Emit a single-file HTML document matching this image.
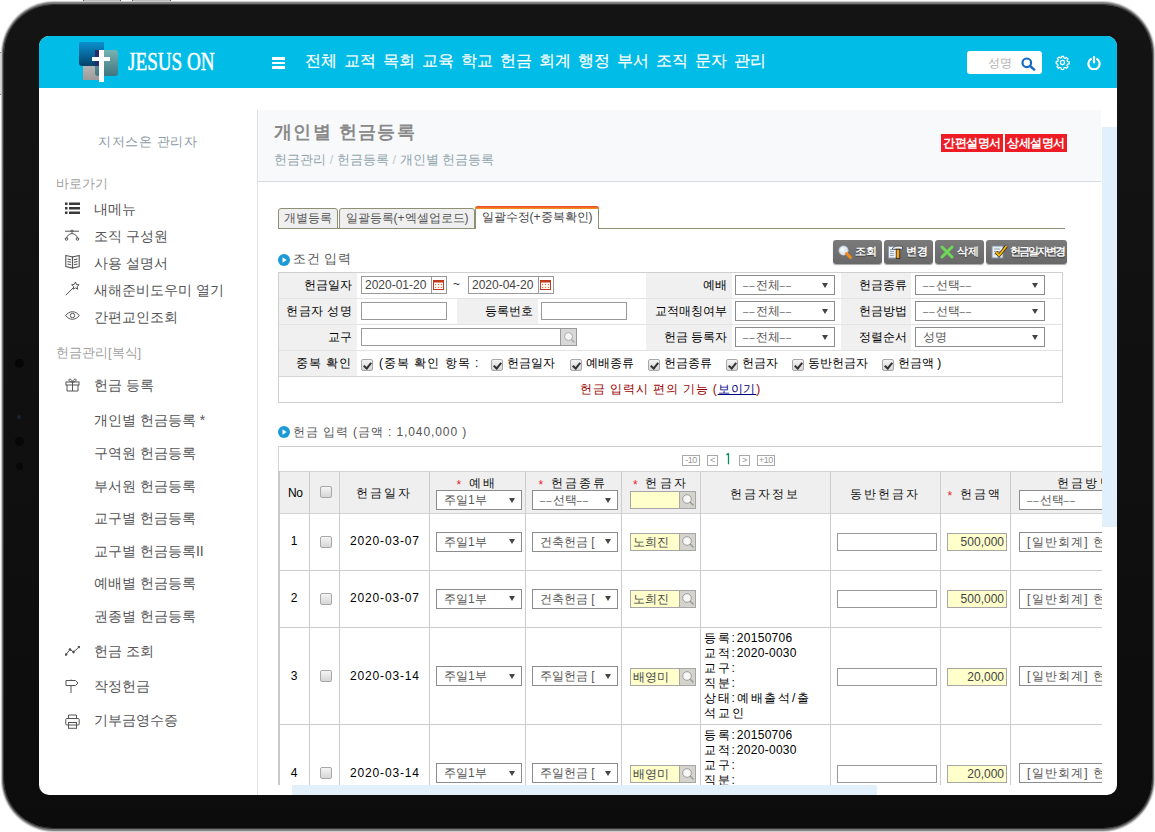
<!DOCTYPE html>
<html><head><meta charset="utf-8">
<style>
*{box-sizing:border-box}
html,body{margin:0;padding:0;width:1155px;height:832px;overflow:hidden;background:#fff;font-family:"Liberation Sans",sans-serif;color:#333}
.a{position:absolute}
#frame{left:1.5px;top:1.5px;width:1152.5px;height:829px;border-radius:52px;background:#8a8a8a;box-shadow:0 0 1px 0.5px #c8c8c8}
#bez{left:4px;top:4.5px;width:1147.5px;height:823.5px;border-radius:49px;background:linear-gradient(#141414,#0c0c0c);box-shadow:0 0 1.5px 1px #222}
#screen{left:39px;top:36px;width:1078px;height:759px;border-radius:10px;overflow:hidden;background:#fff}
#pg{left:-39px;top:-36px;width:1155px;height:832px}
#hdr{left:39px;top:36px;width:1078px;height:52px;background:#00bce6}
.nav{top:51px;color:#fff;font-size:15.5px;-webkit-text-stroke:0.2px #fff;white-space:nowrap}
.side{color:#555;font-size:14px;white-space:nowrap}
.btnr{height:18px;background:#ee1d25;color:#fff;font-size:12px;font-weight:bold;text-align:center;line-height:18px;white-space:nowrap;letter-spacing:-0.5px}
.tab{height:21px;border:1px solid #8f8f73;border-radius:3px 3px 0 0;background:#efefef;font-size:12px;color:#555;text-align:center;line-height:19px;white-space:nowrap}
.btng{height:24px;border-radius:3px;background:linear-gradient(#7a7a7a,#686868);box-shadow:0 1px 1px rgba(0,0,0,.35);color:#fff;font-size:11px;font-weight:bold;line-height:23px;white-space:nowrap;text-shadow:0 1px 1px rgba(0,0,0,.45)}
.lbl{font-size:12px;color:#000;white-space:nowrap;text-align:right;margin-top:-1px}
.inp{border:1px solid #999;background:#fff;height:18px}
.sel{border:1px solid #8c8c8c;background:#fff;height:20px;font-size:12px;color:#555;line-height:18px;padding-left:7px;white-space:nowrap;overflow:hidden}
.sel:after{content:"";position:absolute;right:6px;top:6.5px;border-left:3.2px solid transparent;border-right:3.2px solid transparent;border-top:5.5px solid #444}
.cb{width:12px;height:12px;border:1px solid #a8a8a8;border-radius:2px;background:linear-gradient(#f4f4f4,#d6d6d6)}
.cbc:after{content:"";position:absolute;left:2.5px;top:1px;width:3px;height:6px;border-right:2px solid #333;border-bottom:2px solid #333;transform:rotate(40deg)}
.hl{height:1px;background:#e3e3e3}
.gbg{background:#f0f0f0}
.d{font-style:normal;letter-spacing:1px;font-size:9.5px}
.vl{position:absolute;width:1px;background:#cccccc}
.num{font-size:12px;color:#000;white-space:nowrap;letter-spacing:0.85px}
.th{font-size:12px;color:#111;white-space:nowrap;letter-spacing:2.2px;text-align:center}
.ast{color:#e8232a;-webkit-text-stroke:0;font-size:12px;position:relative;top:2px}
.yin{border:1px solid #a6a6a6;background:#ffffcc;height:18px;font-size:12px;color:#444;line-height:16px;white-space:nowrap}
.mag{position:absolute;top:-1px;height:18px;width:17px;border:1px solid #a6a6a6;background:#d5d3cd}
.info{font-size:12px;color:#000;line-height:14.9px;white-space:nowrap;letter-spacing:1.8px}
.pgb{height:11px;border:1px solid #a8a8a8;font-size:9px;color:#999;text-align:center;line-height:9px;letter-spacing:-0.5px}
.n{font-style:normal;letter-spacing:0.3px}
</style></head><body>
<!-- top buttons -->
<div class="a" style="left:83px;top:0;width:38px;height:5px;background:linear-gradient(#bbb,#e0e0e0);border-left:1.5px solid #555;border-right:1.5px solid #555"></div>
<div class="a" style="left:132px;top:0;width:39px;height:5px;background:linear-gradient(#bbb,#e0e0e0);border-left:1.5px solid #555;border-right:1.5px solid #555"></div>
<div class="a" style="left:0;top:52px;width:5px;height:43px;background:#ddd;border-top:1px solid #888;border-bottom:1px solid #888"></div>
<div id="frame" class="a"></div><div id="bez" class="a"></div>
<div class="a" style="left:15px;top:359px;width:9px;height:9px;border-radius:50%;background:#060606"></div>
<div class="a" style="left:17px;top:415px;width:4px;height:4px;border-radius:50%;background:#1c2230"></div>
<div class="a" style="left:15px;top:437px;width:9px;height:9px;border-radius:50%;background:#070707"></div>
<div class="a" style="left:16px;top:463px;width:7px;height:7px;border-radius:50%;background:#080808"></div>
<div id="screen" class="a">
<div id="pg" class="a">
<div id="hdr" class="a"></div>
<!-- logo -->
<div class="a" style="left:83px;top:66px;width:17px;height:14px;background:linear-gradient(#b8b4b4,#9c9a9a)"></div>
<div class="a" style="left:79px;top:42px;width:25px;height:24px;border-radius:1px 1px 1px 3px;background:linear-gradient(#0c8fcf,#04426a)"></div>
<div class="a" style="left:95px;top:50px;width:23px;height:26px;border-radius:3px;background:linear-gradient(#78b2b2,#3f7680)"></div>
<div class="a" style="left:95px;top:50px;width:9px;height:16px;background:#2a2a66"></div>
<div class="a" style="left:99px;top:50px;width:4.5px;height:32px;background:#fff"></div>
<div class="a" style="left:92px;top:57px;width:18px;height:4px;background:#fff"></div>
<div class="a" style="left:128px;top:47.5px;color:#fff;font-family:'Liberation Serif',serif;font-size:25px;-webkit-text-stroke:0.5px #fff;letter-spacing:0px;transform:scaleX(0.765);transform-origin:left top;white-space:nowrap">JESUS ON</div>
<!-- hamburger -->
<div class="a" style="left:272px;top:57px;width:13px;height:2.5px;background:#fff"></div>
<div class="a" style="left:272px;top:61.5px;width:13px;height:2.5px;background:#fff"></div>
<div class="a" style="left:272px;top:66px;width:13px;height:2.5px;background:#fff"></div>
<div class="a nav" style="left:305px">전체</div>
<div class="a nav" style="left:344px">교적</div>
<div class="a nav" style="left:383px">목회</div>
<div class="a nav" style="left:422px">교육</div>
<div class="a nav" style="left:461px">학교</div>
<div class="a nav" style="left:500px">헌금</div>
<div class="a nav" style="left:539px">회계</div>
<div class="a nav" style="left:578px">행정</div>
<div class="a nav" style="left:617px">부서</div>
<div class="a nav" style="left:656px">조직</div>
<div class="a nav" style="left:695px">문자</div>
<div class="a nav" style="left:734px">관리</div>
<!-- sidebar -->
<div class="a" style="left:257px;top:110px;width:1px;height:700px;background:#dde1e4"></div>
<div class="a" style="left:39px;top:133px;width:218px;text-align:center;font-size:13px;color:#8d9ba5;letter-spacing:0.6px">지저스온 관리자</div>
<div class="a" style="left:56px;top:175px;font-size:13px;color:#a0a0a0;white-space:nowrap">바로가기</div>
<div class="a side" style="left:94px;top:201px">내메뉴</div>
<div class="a side" style="left:94px;top:228px">조직 구성원</div>
<div class="a side" style="left:94px;top:255px">사용 설명서</div>
<div class="a side" style="left:94px;top:282px">새해준비도우미 열기</div>
<div class="a side" style="left:94px;top:309px">간편교인조회</div>
<div class="a" style="left:56px;top:344px;font-size:13px;color:#a0a0a0;white-space:nowrap">헌금관리[복식]</div>
<div class="a side" style="left:94px;top:377px">헌금 등록</div>
<div class="a side" style="left:94px;top:412px">개인별 헌금등록 *</div>
<div class="a side" style="left:94px;top:445px">구역원 헌금등록</div>
<div class="a side" style="left:94px;top:478px">부서원 헌금등록</div>
<div class="a side" style="left:94px;top:510px">교구별 헌금등록</div>
<div class="a side" style="left:94px;top:543px">교구별 헌금등록II</div>
<div class="a side" style="left:94px;top:575px">예배별 헌금등록</div>
<div class="a side" style="left:94px;top:608px">권종별 헌금등록</div>
<div class="a side" style="left:94px;top:643px">헌금 조회</div>
<div class="a side" style="left:94px;top:678px">작정헌금</div>
<div class="a side" style="left:94px;top:712px">기부금영수증</div>
<!-- sidebar icons -->
<svg class="a" style="left:65px;top:202px" width="15" height="13" viewBox="0 0 15 13"><g fill="#3a3a3a"><rect x="0" y="0.5" width="2.5" height="2.5"/><rect x="4" y="0.5" width="11" height="2.5"/><rect x="0" y="5" width="2.5" height="2.5"/><rect x="4" y="5" width="11" height="2.5"/><rect x="0" y="9.5" width="2.5" height="2.5"/><rect x="4" y="9.5" width="11" height="2.5"/></g></svg>
<svg class="a" style="left:64px;top:229px" width="16" height="12" viewBox="0 0 16 12"><g fill="none" stroke="#555" stroke-width="1"><path d="M2.5 9.5C3.5 3 12.5 3 13.5 9.5"/><line x1="1" y1="2.2" x2="15" y2="2.2"/><circle cx="2.5" cy="10" r="1.3"/><circle cx="13.5" cy="10" r="1.3"/><circle cx="8" cy="2.2" r="1.1"/></g></svg>
<svg class="a" style="left:65px;top:254px" width="15" height="15" viewBox="0 0 15 15"><g fill="none" stroke="#555" stroke-width="1.1"><path d="M0.8 1.5L7.5 3V14L0.8 12.5Z"/><path d="M14.2 1.5L7.5 3V14L14.2 12.5Z"/><path d="M2.5 5l3.5 .8M2.5 7.5l3.5 .8M2.5 10l3.5 .8M12.5 5l-3.5 .8M12.5 7.5l-3.5 .8M12.5 10l-3.5 .8"/></g></svg>
<svg class="a" style="left:65px;top:281px" width="15" height="15" viewBox="0 0 15 15"><g fill="none" stroke="#555" stroke-width="1"><path d="M0.8 14.2L9 6"/><path d="M10.5 1l1 2.5 2.6.3-2 1.8.6 2.6-2.3-1.3-2.3 1.3.5-2.6-2-1.8 2.6-.3z"/></g></svg>
<svg class="a" style="left:65px;top:310px" width="15" height="11" viewBox="0 0 15 11"><g fill="none" stroke="#555" stroke-width="1"><path d="M0.8 5.5C4 0.5 11 0.5 14.2 5.5C11 10.5 4 10.5 0.8 5.5Z"/><circle cx="7.5" cy="5.5" r="2.2"/></g></svg>
<svg class="a" style="left:65px;top:377px" width="15" height="15" viewBox="0 0 15 15"><g fill="none" stroke="#555" stroke-width="1"><rect x="1" y="5" width="13" height="3"/><path d="M2 8v6h11V8"/><path d="M7.5 5v9"/><path d="M7.5 5C6 1 3.5 1.5 4 3.5 4.3 4.5 6 5 7.5 5 9 5 10.7 4.5 11 3.5 11.5 1.5 9 1 7.5 5"/></g></svg>
<svg class="a" style="left:65px;top:646px" width="15" height="10" viewBox="0 0 15 10"><g fill="#444" stroke="#555" stroke-width="1"><path d="M1 8.5L5 3.5 8.5 6 14 1" fill="none"/><circle cx="1" cy="8.5" r="0.9"/><circle cx="5" cy="3.5" r="0.9"/><circle cx="8.5" cy="6" r="0.9"/><circle cx="14" cy="1" r="0.9"/></g></svg>
<svg class="a" style="left:65px;top:679px" width="14" height="15" viewBox="0 0 14 15"><g fill="none" stroke="#555" stroke-width="1"><path d="M1 1.5H10.5L13 4 10.5 6.5H1Z"/><path d="M6 0.5V1.5M6 6.5V14"/></g></svg>
<svg class="a" style="left:65px;top:714px" width="15" height="15" viewBox="0 0 15 15"><g fill="none" stroke="#555" stroke-width="1"><path d="M3.5 4.5V1h8v3.5"/><rect x="0.8" y="4.5" width="13.4" height="6.5" rx="1"/><rect x="3.5" y="8.5" width="8" height="5.8"/></g></svg>
<!-- page header -->
<div class="a" style="left:258px;top:110px;width:843px;height:72px;background:#f7f9fb;border-bottom:1px solid #d3dde2"></div>
<div class="a" style="left:274px;top:120px;font-size:18px;font-weight:bold;color:#8a8a8a;white-space:nowrap;letter-spacing:1.4px">개인별 헌금등록</div>
<div class="a" style="left:274px;top:151px;font-size:13px;color:#92a4ab;white-space:nowrap">헌금관리 <span style="color:#c8c8c8">/</span> 헌금등록 <span style="color:#c8c8c8">/</span> 개인별 헌금등록</div>
<div class="a btnr" style="left:941px;top:134px;width:62px">간편설명서</div>
<div class="a btnr" style="left:1005px;top:134px;width:62px">상세설명서</div>
<!-- v scrollbar -->
<div class="a" style="left:1102px;top:127px;width:15px;height:400px;background:#e1f0fb"></div>
<!-- tabs -->
<div class="a" style="left:278px;top:227.5px;width:787px;height:1px;background:#8f8f73"></div>
<div class="a tab" style="left:278px;top:208px;width:60px">개별등록</div>
<div class="a tab" style="left:339px;top:208px;width:136px">일괄등록(+엑셀업로드)</div>
<div class="a tab" style="left:475px;top:206px;width:124px;height:23px;background:#fff;border-top:0;border-bottom:0;line-height:22px;color:#444"><div class="a" style="left:-1px;top:0;width:124px;height:3px;border-radius:3px 3px 0 0;background:linear-gradient(#e8402a,#f59a1f)"></div>일괄수정(+중복확인)</div>
<!-- action buttons -->
<div class="a btng" style="left:833px;top:240px;width:49px"><svg class="a" style="left:5px;top:5px" width="14" height="14" viewBox="0 0 14 14"><circle cx="5.5" cy="5.5" r="4.5" fill="#dfeaf2" stroke="#c8d0d6" stroke-width="1"/><circle cx="4.5" cy="4.5" r="2" fill="#fff" opacity=".8"/><path d="M8.5 8.5L12.5 12.5" stroke="#f08a1c" stroke-width="3" stroke-linecap="round"/></svg><span class="a" style="left:22px;top:0">조회</span></div>
<div class="a btng" style="left:884px;top:240px;width:49px"><svg class="a" style="left:4px;top:5px" width="15" height="14" viewBox="0 0 15 14"><rect x="0.5" y="1.5" width="9" height="11.5" fill="#eef2f7" stroke="#8d9cb0" stroke-width="1"/><path d="M2 4.5h6M2 6.5h4M2 8.5h4M2 10.5h4" stroke="#8d9cb0" stroke-width=".9"/><path d="M4.5 3.2C6 1.2 10 0.6 14.5 1.6V4.2H4.5Z" fill="#f2f2f2" stroke="#333" stroke-width=".7"/><rect x="8.2" y="4.2" width="3.6" height="9.3" fill="#f7a21b" stroke="#222" stroke-width=".8"/></svg><span class="a" style="left:22px;top:0">변경</span></div>
<div class="a btng" style="left:935px;top:240px;width:49px"><svg class="a" style="left:5px;top:5px" width="14" height="14" viewBox="0 0 14 14"><path d="M2 2L12 12M12 2L2 12" stroke="#6fd65a" stroke-width="3" stroke-linecap="round"/></svg><span class="a" style="left:22px;top:0">삭제</span></div>
<div class="a btng" style="left:986px;top:240px;width:81px"><svg class="a" style="left:5px;top:4px" width="17" height="15" viewBox="0 0 17 15"><rect x="1" y="2" width="11" height="12" fill="#e8eef5" stroke="#7d8ea3" stroke-width="1"/><path d="M3 5h6M3 7.5h6M3 10h6" stroke="#7d8ea3" stroke-width=".8"/><path d="M5 8l3 3.5L15.5 2" fill="none" stroke="#222" stroke-width="3.2"/><path d="M5 8l3 3.5L15.5 2" fill="none" stroke="#f7b500" stroke-width="2"/></svg><span class="a" style="left:24px;top:0;letter-spacing:-2.1px;font-size:10.5px">헌금일자변경</span></div>
<!-- section 1 title -->
<svg class="a" style="left:278px;top:254px" width="12" height="12" viewBox="0 0 12 12"><circle cx="6" cy="6" r="6" fill="#1a9ad6"/><path d="M4.5 3.3L8.6 6 4.5 8.7Z" fill="#fff"/></svg>
<div class="a" style="left:293px;top:250px;font-size:13px;color:#555;white-space:nowrap;letter-spacing:0.6px">조건 입력</div>
<!-- condition table -->
<div class="a" style="left:278px;top:272px;width:785px;height:131px;border:1px solid #cfcfcf;background:#fff"></div>
<div class="a gbg" style="left:279px;top:273px;width:78px;height:103px"></div>
<div class="a gbg" style="left:646px;top:273px;width:86px;height:77px"></div>
<div class="a gbg" style="left:841px;top:273px;width:70px;height:77px"></div>
<div class="a gbg" style="left:457px;top:299px;width:81px;height:25px"></div>
<div class="a hl" style="left:279px;top:298px;width:783px"></div>
<div class="a hl" style="left:279px;top:324px;width:783px"></div>
<div class="a hl" style="left:279px;top:350px;width:783px"></div>
<div class="a" style="left:279px;top:376px;width:783px;height:1px;background:#d6d6d6"></div>
<div class="a lbl" style="left:279px;top:278px;width:73px">헌금일자</div>
<div class="a lbl" style="left:279px;top:304px;width:73px;letter-spacing:0.4px">헌금자 성명</div>
<div class="a lbl" style="left:279px;top:330px;width:73px">교구</div>
<div class="a lbl" style="left:279px;top:356px;width:73px;letter-spacing:1px">중복 확인</div>
<div class="a lbl" style="left:457px;top:304px;width:76px">등록번호</div>
<div class="a lbl" style="left:646px;top:278px;width:81px">예배</div>
<div class="a lbl" style="left:646px;top:304px;width:81px">교적매칭여부</div>
<div class="a lbl" style="left:646px;top:330px;width:81px">헌금 등록자</div>
<div class="a lbl" style="left:841px;top:278px;width:66px">헌금종류</div>
<div class="a lbl" style="left:841px;top:304px;width:66px">헌금방법</div>
<div class="a lbl" style="left:841px;top:330px;width:66px">정렬순서</div>
<!-- date inputs -->
<div class="a inp" style="left:361px;top:276px;width:86px"><div class="a" style="left:68.5px;top:0;width:1px;height:16px;background:#999"></div><span class="a" style="left:3px;top:1px;font-size:12px;color:#444;white-space:nowrap">2020-01-20</span><svg class="a" style="left:71px;top:3px" width="11" height="10" viewBox="0 0 11 10"><rect x=".5" y=".5" width="10" height="9" fill="#fff" stroke="#c0391b"/><rect x=".5" y=".5" width="10" height="2" fill="#c0391b"/><g fill="#f07a3a"><rect x="2" y="4" width="1.2" height="1.2"/><rect x="4.9" y="4" width="1.2" height="1.2"/><rect x="7.8" y="4" width="1.2" height="1.2"/><rect x="2" y="6.8" width="1.2" height="1.2"/><rect x="4.9" y="6.8" width="1.2" height="1.2"/><rect x="7.8" y="6.8" width="1.2" height="1.2"/></g></svg></div>
<div class="a" style="left:453px;top:277px;font-size:12px;color:#333">~</div>
<div class="a inp" style="left:468px;top:276px;width:86px"><div class="a" style="left:68.5px;top:0;width:1px;height:16px;background:#999"></div><span class="a" style="left:3px;top:1px;font-size:12px;color:#444;white-space:nowrap">2020-04-20</span><svg class="a" style="left:71px;top:3px" width="11" height="10" viewBox="0 0 11 10"><rect x=".5" y=".5" width="10" height="9" fill="#fff" stroke="#c0391b"/><rect x=".5" y=".5" width="10" height="2" fill="#c0391b"/><g fill="#f07a3a"><rect x="2" y="4" width="1.2" height="1.2"/><rect x="4.9" y="4" width="1.2" height="1.2"/><rect x="7.8" y="4" width="1.2" height="1.2"/><rect x="2" y="6.8" width="1.2" height="1.2"/><rect x="4.9" y="6.8" width="1.2" height="1.2"/><rect x="7.8" y="6.8" width="1.2" height="1.2"/></g></svg></div>
<div class="a inp" style="left:361px;top:302px;width:86px"></div>
<div class="a inp" style="left:541px;top:302px;width:86px"></div>
<div class="a inp" style="left:361px;top:328px;width:216px;background:linear-gradient(90deg,#fff 199px,#d8d8d8 199px)"><div class="a" style="left:198px;top:0;width:1px;height:16px;background:#999"></div><svg class="a" style="left:201px;top:2px" width="13" height="13" viewBox="0 0 13 13"><circle cx="5.5" cy="5.5" r="4" fill="#f4f4f4" stroke="#aaa"/><path d="M8.5 8.5L11.5 11.5" stroke="#aaa" stroke-width="1.5"/></svg></div>
<div class="a sel" style="left:735px;top:275px;width:100px"><i class="d">&ndash;&ndash;</i>전체<i class="d">&ndash;&ndash;</i></div>
<div class="a sel" style="left:735px;top:301px;width:100px"><i class="d">&ndash;&ndash;</i>전체<i class="d">&ndash;&ndash;</i></div>
<div class="a sel" style="left:735px;top:327px;width:100px"><i class="d">&ndash;&ndash;</i>전체<i class="d">&ndash;&ndash;</i></div>
<div class="a sel" style="left:915px;top:275px;width:130px"><i class="d">&ndash;&ndash;</i>선택<i class="d">&ndash;&ndash;</i></div>
<div class="a sel" style="left:915px;top:301px;width:130px"><i class="d">&ndash;&ndash;</i>선택<i class="d">&ndash;&ndash;</i></div>
<div class="a sel" style="left:915px;top:327px;width:130px">성명</div>
<!-- row 4 -->
<div class="a cb cbc" style="left:361px;top:359px"></div>
<div class="a lbl" style="left:379px;top:356px;text-align:left;letter-spacing:1px">(중복 확인 항목 :</div>
<div class="a cb cbc" style="left:491px;top:359px"></div><div class="a lbl" style="left:507px;top:356px;text-align:left">헌금일자</div>
<div class="a cb cbc" style="left:570px;top:359px"></div><div class="a lbl" style="left:586px;top:356px;text-align:left">예배종류</div>
<div class="a cb cbc" style="left:648px;top:359px"></div><div class="a lbl" style="left:664px;top:356px;text-align:left">헌금종류</div>
<div class="a cb cbc" style="left:726px;top:359px"></div><div class="a lbl" style="left:742px;top:356px;text-align:left">헌금자</div>
<div class="a cb cbc" style="left:792px;top:359px"></div><div class="a lbl" style="left:808px;top:356px;text-align:left">동반헌금자</div>
<div class="a cb cbc" style="left:882px;top:359px"></div><div class="a lbl" style="left:898px;top:356px;text-align:left">헌금액 )</div>
<div class="a" style="left:279px;top:380.5px;width:783px;text-align:center;font-size:12px;color:#990000;white-space:nowrap;letter-spacing:0.9px">헌금 입력시 편의 기능 (<u style="color:#000080">보이기</u>)</div>
<!-- section 2 title -->
<svg class="a" style="left:278px;top:426px" width="12" height="12" viewBox="0 0 12 12"><circle cx="6" cy="6" r="6" fill="#1a9ad6"/><path d="M4.5 3.3L8.6 6 4.5 8.7Z" fill="#fff"/></svg>
<div class="a" style="left:293px;top:424px;font-size:12px;color:#555;white-space:nowrap;letter-spacing:0.9px">헌금 입력 (금액 : 1,040,000 )</div>
<!-- data table -->
<div class="a" style="left:278px;top:446px;width:824px;height:339px;overflow:hidden">
<div class="a" style="left:-278px;top:-446px;width:1155px;height:832px">
<div class="a" style="left:278px;top:446px;width:900px;height:1px;background:#cdcdcd"></div>
<div class="a" style="left:278px;top:446px;width:1px;height:26px;background:#d3d3d3"></div><div class="a" style="left:278px;top:471px;width:2px;height:400px;background:#c9c9c9"></div>
<!-- pagination -->
<div class="a pgb" style="left:682px;top:455px;width:18px">-10</div>
<div class="a pgb" style="left:707px;top:455px;width:11px">&lt;</div>
<svg class="a" style="left:725px;top:452px" width="6" height="13" viewBox="0 0 6 13"><path d="M3.5 1.2V12.2M3.5 1.2L1.5 3" stroke="#0b8a5c" stroke-width="1.3" fill="none"/></svg>
<div class="a pgb" style="left:739px;top:455px;width:11px">&gt;</div>
<div class="a pgb" style="left:757px;top:455px;width:18px">+10</div>
<!-- header -->
<div class="a" style="left:280px;top:471px;width:900px;height:43px;background:#efefef;border-top:1px solid #d3d3d3;border-bottom:1px solid #d3d3d3"></div>
<div class="vl" style="left:309px;top:471px;height:400px"></div>
<div class="vl" style="left:339px;top:471px;height:400px"></div>
<div class="vl" style="left:429px;top:471px;height:400px"></div>
<div class="vl" style="left:525px;top:471px;height:400px"></div>
<div class="vl" style="left:621px;top:471px;height:400px"></div>
<div class="vl" style="left:700px;top:471px;height:400px"></div>
<div class="vl" style="left:830px;top:471px;height:400px"></div>
<div class="vl" style="left:940px;top:471px;height:400px"></div>
<div class="vl" style="left:1010px;top:471px;height:400px"></div>
<div class="a" style="left:280px;top:570px;width:900px;height:1px;background:#cccccc"></div>
<div class="a" style="left:280px;top:627px;width:900px;height:1px;background:#cccccc"></div>
<div class="a" style="left:280px;top:724px;width:900px;height:1px;background:#cccccc"></div>
<div class="a num" style="left:288px;top:486px;letter-spacing:-0.5px">No</div>
<div class="a cb" style="left:320px;top:486px"></div>
<div class="a th" style="left:339px;top:485px;width:90px">헌금일자</div>
<div class="a th" style="left:429px;top:475px;width:96px"><span class="ast">*</span> 예배</div>
<div class="a sel" style="left:436px;top:490px;width:86px">주일1부</div>
<div class="a th" style="left:525px;top:475px;width:96px"><span class="ast">*</span> 헌금종류</div>
<div class="a sel" style="left:532px;top:490px;width:86px"><i class="d">&ndash;&ndash;</i>선택<i class="d">&ndash;&ndash;</i></div>
<div class="a th" style="left:621px;top:475px;width:79px"><span class="ast">*</span> 헌금자</div>
<div class="a yin" style="left:630px;top:491px;width:50px"><div class="mag" style="left:48px"><svg class="a" style="left:1px;top:1px" width="14" height="14" viewBox="0 0 14 14"><circle cx="6" cy="6" r="4.3" fill="#f7f7f7" stroke="#9c9c9c" stroke-width="1"/><path d="M9 9L12.5 12.5" stroke="#9c9c9c" stroke-width="1.6"/></svg></div></div>
<div class="a th" style="left:700px;top:486px;width:130px">헌금자정보</div>
<div class="a th" style="left:830px;top:486px;width:110px">동반헌금자</div>
<div class="a th" style="left:940px;top:486px;width:70px"><span class="ast">*</span> 헌금액</div>
<div class="a th" style="left:1057px;top:475px;text-align:left">헌금방법</div>
<div class="a sel" style="left:1019px;top:490px;width:120px"><i class="d">&ndash;&ndash;</i>선택<i class="d">&ndash;&ndash;</i></div>
<div class="a num" style="left:280px;top:534.0px;width:29px;text-align:center">1</div>
<div class="a cb" style="left:320px;top:535.5px"></div>
<div class="a num" style="left:350px;top:534.0px">2020-03-07</div>
<div class="a sel" style="left:436px;top:531.5px;width:86px">주일1부</div>
<div class="a sel" style="left:532px;top:531.5px;width:86px">건축헌금 [</div>
<div class="a yin" style="left:630px;top:533.0px;width:50px;padding-left:2px">노희진<div class="mag" style="left:48px"><svg class="a" style="left:1px;top:1px" width="14" height="14" viewBox="0 0 14 14"><circle cx="6" cy="6" r="4.3" fill="#f7f7f7" stroke="#9c9c9c" stroke-width="1"/><path d="M9 9L12.5 12.5" stroke="#9c9c9c" stroke-width="1.6"/></svg></div></div>
<div class="a inp" style="left:837px;top:533.0px;width:100px"></div>
<div class="a yin" style="left:947px;top:533.0px;width:60px;text-align:right;padding-right:2px">500,000</div>
<div class="a sel" style="left:1019px;top:531.5px;width:120px"><span style="letter-spacing:1.2px">[일반회계] 현금</span></div>
<div class="a num" style="left:280px;top:591.0px;width:29px;text-align:center">2</div>
<div class="a cb" style="left:320px;top:592.5px"></div>
<div class="a num" style="left:350px;top:591.0px">2020-03-07</div>
<div class="a sel" style="left:436px;top:588.5px;width:86px">주일1부</div>
<div class="a sel" style="left:532px;top:588.5px;width:86px">건축헌금 [</div>
<div class="a yin" style="left:630px;top:590.0px;width:50px;padding-left:2px">노희진<div class="mag" style="left:48px"><svg class="a" style="left:1px;top:1px" width="14" height="14" viewBox="0 0 14 14"><circle cx="6" cy="6" r="4.3" fill="#f7f7f7" stroke="#9c9c9c" stroke-width="1"/><path d="M9 9L12.5 12.5" stroke="#9c9c9c" stroke-width="1.6"/></svg></div></div>
<div class="a inp" style="left:837px;top:590.0px;width:100px"></div>
<div class="a yin" style="left:947px;top:590.0px;width:60px;text-align:right;padding-right:2px">500,000</div>
<div class="a sel" style="left:1019px;top:588.5px;width:120px"><span style="letter-spacing:1.2px">[일반회계] 현금</span></div>
<div class="a num" style="left:280px;top:668.5px;width:29px;text-align:center">3</div>
<div class="a cb" style="left:320px;top:670px"></div>
<div class="a num" style="left:350px;top:668.5px">2020-03-14</div>
<div class="a sel" style="left:436px;top:666px;width:86px">주일1부</div>
<div class="a sel" style="left:532px;top:666px;width:86px">주일헌금 [</div>
<div class="a yin" style="left:630px;top:667.5px;width:50px;padding-left:2px">배영미<div class="mag" style="left:48px"><svg class="a" style="left:1px;top:1px" width="14" height="14" viewBox="0 0 14 14"><circle cx="6" cy="6" r="4.3" fill="#f7f7f7" stroke="#9c9c9c" stroke-width="1"/><path d="M9 9L12.5 12.5" stroke="#9c9c9c" stroke-width="1.6"/></svg></div></div>
<div class="a inp" style="left:837px;top:667.5px;width:100px"></div>
<div class="a yin" style="left:947px;top:667.5px;width:60px;text-align:right;padding-right:2px">20,000</div>
<div class="a sel" style="left:1019px;top:666px;width:120px"><span style="letter-spacing:1.2px">[일반회계] 현금</span></div>
<div class="a info" style="left:704px;top:631px">등록:<i class="n">20150706</i><br>교적:<i class="n">2020-0030</i><br>교구:<br>직분:<br>상태:예배출석/출<br>석교인</div>
<div class="a num" style="left:280px;top:765.5px;width:29px;text-align:center">4</div>
<div class="a cb" style="left:320px;top:767px"></div>
<div class="a num" style="left:350px;top:765.5px">2020-03-14</div>
<div class="a sel" style="left:436px;top:763px;width:86px">주일1부</div>
<div class="a sel" style="left:532px;top:763px;width:86px">주일헌금 [</div>
<div class="a yin" style="left:630px;top:764.5px;width:50px;padding-left:2px">배영미<div class="mag" style="left:48px"><svg class="a" style="left:1px;top:1px" width="14" height="14" viewBox="0 0 14 14"><circle cx="6" cy="6" r="4.3" fill="#f7f7f7" stroke="#9c9c9c" stroke-width="1"/><path d="M9 9L12.5 12.5" stroke="#9c9c9c" stroke-width="1.6"/></svg></div></div>
<div class="a inp" style="left:837px;top:764.5px;width:100px"></div>
<div class="a yin" style="left:947px;top:764.5px;width:60px;text-align:right;padding-right:2px">20,000</div>
<div class="a sel" style="left:1019px;top:763px;width:120px"><span style="letter-spacing:1.2px">[일반회계] 현금</span></div>
<div class="a info" style="left:704px;top:728px">등록:<i class="n">20150706</i><br>교적:<i class="n">2020-0030</i><br>교구:<br>직분:<br>상태:예배출석/출<br>석교인</div>
</div></div>
<!-- h scrollbar -->
<div class="a" style="left:292px;top:785px;width:585px;height:12px;background:#e1f0fb"></div>
<!-- search -->
<div class="a" style="left:967px;top:51px;width:75px;height:23px;border-radius:3px;background:#fff"></div>
<div class="a" style="left:988px;top:55px;font-size:12px;color:#b0b0b0;white-space:nowrap">성명</div>
<svg class="a" style="left:1021px;top:57px" width="15" height="14" viewBox="0 0 15 14"><circle cx="5.8" cy="5.8" r="4.3" fill="none" stroke="#1668c4" stroke-width="2.2"/><line x1="9" y1="9" x2="13.2" y2="12.6" stroke="#1668c4" stroke-width="2.4" stroke-linecap="round"/></svg>
<!-- gear -->
<svg class="a" style="left:1055px;top:55px" width="15" height="15" viewBox="0 0 24 24"><path fill="none" stroke="#fff" stroke-width="2" d="M10.3 2h3.4l.5 2.6 1.9.8 2.2-1.5 2.4 2.4-1.5 2.2.8 1.9 2.6.5v3.4l-2.6.5-.8 1.9 1.5 2.2-2.4 2.4-2.2-1.5-1.9.8-.5 2.6h-3.4l-.5-2.6-1.9-.8-2.2 1.5-2.4-2.4 1.5-2.2-.8-1.9L2 13.7v-3.4l2.6-.5.8-1.9-1.5-2.2 2.4-2.4 2.2 1.5 1.9-.8z"/><circle cx="12" cy="12" r="3.3" fill="none" stroke="#fff" stroke-width="2"/></svg>
<!-- power -->
<svg class="a" style="left:1087px;top:56px" width="14" height="14" viewBox="0 0 14 14"><path d="M3.8 3.2A5.6 5.6 0 1 0 10.2 3.2" fill="none" stroke="#fff" stroke-width="2.2" stroke-linecap="round"/><line x1="7" y1="1.2" x2="7" y2="6.5" stroke="#fff" stroke-width="2.2" stroke-linecap="round"/></svg>
</div>
</div>
</body></html>
